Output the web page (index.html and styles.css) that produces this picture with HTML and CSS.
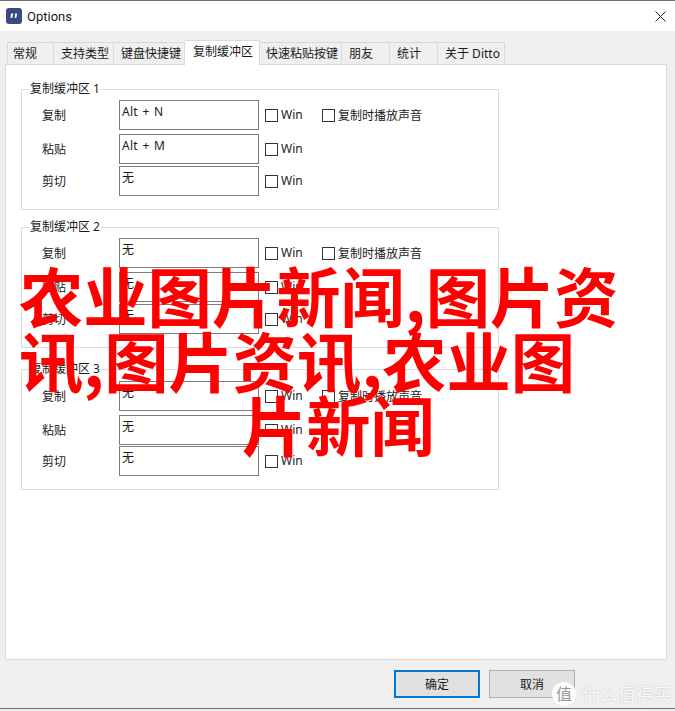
FILE: index.html
```html
<!DOCTYPE html>
<html lang="zh-cn">
<head>
    <meta charset="UTF-8">
    <title>Options</title>
    <link rel="stylesheet" href="styles.css">
</head>
<body>
    <div class="window">
        <div class="titlebar">
            <svg class="app-icon" width="16" height="16" viewBox="0 0 16 16">
                <rect width="16" height="16" rx="3" fill="#3b4a7f"/>
                <path d="M5 5.5h2.2L6.2 10H4.6zM9 5.5h2.2L10.2 10H8.6z" fill="#fff"/>
            </svg>
            <span class="title">Options</span>
            <svg class="close" width="11" height="11" viewBox="0 0 11 11">
                <path d="M.5.5l10 10M10.5.5l-10 10" stroke="#222" stroke-width="1" fill="none"/>
            </svg>
        </div>
        <div class="body">
            <div class="tabs">
                <div class="tab tab-1">常规</div>
                <div class="tab tab-2">支持类型</div>
                <div class="tab tab-3">键盘快捷键</div>
                <div class="tab tab-4 active">复制缓冲区</div>
                <div class="tab tab-5">快速粘贴按键</div>
                <div class="tab tab-6">朋友</div>
                <div class="tab tab-7">统计</div>
                <div class="tab tab-8">关于 Ditto</div>
            </div>
            <div class="pane">
                <fieldset class="group group-1">
                    <legend>复制缓冲区 1</legend>
                    <div class="row">
                        <label class="name">复制</label>
                        <div class="hotkey">Alt + N</div>
                        <span class="check"></span><span class="win">Win</span>
                        <span class="check second"></span><span class="sound">复制时播放声音</span>
                    </div>
                    <div class="row">
                        <label class="name">粘贴</label>
                        <div class="hotkey">Alt + M</div>
                        <span class="check"></span><span class="win">Win</span>
                    </div>
                    <div class="row tight">
                        <label class="name">剪切</label>
                        <div class="hotkey">无</div>
                        <span class="check"></span><span class="win">Win</span>
                    </div>
                </fieldset>
                <fieldset class="group group-2">
                    <legend>复制缓冲区 2</legend>
                    <div class="row">
                        <label class="name">复制</label>
                        <div class="hotkey">无</div>
                        <span class="check"></span><span class="win">Win</span>
                        <span class="check second"></span><span class="sound">复制时播放声音</span>
                    </div>
                    <div class="row">
                        <label class="name">粘贴</label>
                        <div class="hotkey">无</div>
                        <span class="check"></span><span class="win">Win</span>
                    </div>
                    <div class="row tight">
                        <label class="name">剪切</label>
                        <div class="hotkey">无</div>
                        <span class="check"></span><span class="win">Win</span>
                    </div>
                </fieldset>
                <fieldset class="group group-3">
                    <legend>复制缓冲区 3</legend>
                    <div class="row">
                        <label class="name">复制</label>
                        <div class="hotkey">无</div>
                        <span class="check"></span><span class="win">Win</span>
                        <span class="check second"></span><span class="sound">复制时播放声音</span>
                    </div>
                    <div class="row">
                        <label class="name">粘贴</label>
                        <div class="hotkey">无</div>
                        <span class="check"></span><span class="win">Win</span>
                    </div>
                    <div class="row tight">
                        <label class="name">剪切</label>
                        <div class="hotkey">无</div>
                        <span class="check"></span><span class="win">Win</span>
                    </div>
                </fieldset>
            </div>
            <div class="buttons">
                <button class="btn default">确定</button>
                <button class="btn">取消</button>
            </div>
        </div>
        <div class="headline">
            <span class="line line-1">农业图片新闻,图片资</span>
            <span class="line line-2">讯,图片资讯,农业图</span>
            <span class="line line-3">片新闻</span>
        </div>
        <div class="watermark">
            <span class="wm-badge">值</span>
            <span class="wm-text">什么值得买</span>
        </div>
    </div>
</body>
</html>
```

FILE: styles.css
```css
* {
    box-sizing: border-box;
}
body {
    margin: 0;
    font-family: "Noto Sans", "Noto Sans CJK SC", sans-serif;
    font-size: 12px;
    color: #1a1a1a;
    background-color: #efefef;
}
.window {
    position: relative;
    width: 675px;
    height: 711px;
    overflow: hidden;
    border-top: 1px solid #6e6e6e;
}
.titlebar {
    height: 30px;
    display: flex;
    align-items: center;
    padding: 0 9px 0 6px;
    background-color: #fff;
}
.title {
    margin-left: 5px;
    font-family: Roboto, sans-serif;
    font-size: 13px;
}
.close {
    margin-left: auto;
}
.body {
    height: 678px;
    padding: 11px 8px 0 5px;
    background-color: #efefef;
    border-bottom: 1px solid #6e6e6e;
}
.tabs {
    display: flex;
    height: 22px;
    padding-left: 2px;
}
.tab {
    height: 22px;
    padding-left: 7px;
    line-height: 22px;
    border: 1px solid #d9d9d9;
    border-bottom: none;
    border-left: none;
    white-space: nowrap;
}
.tab-1 { width: 47px; padding-left: 5px; border-left: 1px solid #d9d9d9; }
.tab-2 { width: 60px; }
.tab-3 { width: 71px; }
.tab-4 { width: 75px; }
.tab-5 { width: 82px; padding-left: 6px; }
.tab-6 { width: 48px; }
.tab-7 { width: 48px; }
.tab-8 { width: 67px; }
.tab.active {
    position: relative;
    height: 25px;
    margin-top: -2px;
    padding-left: 8px;
    background-color: #fff;
    z-index: 1;
}
.pane {
    height: 596px;
    padding: 17px 0 0 15px;
    background-color: #fff;
    border: 1px solid #d9d9d9;
}
.group {
    width: 478px;
    height: 128px;
    margin: 0;
    padding: 4px 0 0 0;
    border: 1px solid #dcdcdc;
}
.group-1 { margin-bottom: 10px; }
.group-2 { margin-bottom: 14px; }
.group-3 { padding-top: 5px; }
.group-3 .row.tight { margin-top: -3px; }
.group legend {
    margin-left: 7px;
    padding: 0 1px;
    font-size: 12px;
    line-height: 14px;
}
.row {
    display: flex;
    align-items: center;
    height: 30px;
    margin-bottom: 4px;
    padding-left: 20px;
}
.row.tight {
    margin-top: -2px;
}
.name {
    width: 77px;
}
.hotkey {
    width: 140px;
    height: 30px;
    padding: 3px 0 0 2px;
    line-height: 16px;
    word-spacing: 1px;
    letter-spacing: 0.3px;
    border: 1px solid #7a7a7a;
    background-color: #fff;
}
.check {
    width: 13px;
    height: 13px;
    margin-left: 6px;
    border: 1px solid #333;
    background-color: #fff;
}
.win {
    width: 28px;
    margin-left: 3px;
    padding-bottom: 1px;
}
.check.second {
    margin-left: 13px;
}
.sound {
    margin-left: 3px;
    padding-bottom: 1px;
}
.buttons {
    display: flex;
    justify-content: flex-end;
    gap: 9px;
    padding: 10px 92px 0 0;
}
.btn {
    width: 86px;
    height: 28px;
    padding: 0;
    font-family: inherit;
    font-size: 12px;
    color: #1a1a1a;
    background-color: #e1e1e1;
    border: 1px solid #adadad;
}
.btn.default {
    border: 2px solid #0078d7;
}
.headline {
    position: absolute;
    left: 0;
    top: 261px;
    width: 675px;
    font-family: "Noto Sans CJK SC", sans-serif;
    font-size: 64.3px;
    font-weight: 700;
    line-height: 64.5px;
    color: #ff0000;
    white-space: nowrap;
}
.line {
    display: block;
}
.line-1 { padding-left: 19px; }
.line-2 { padding-left: 19px; }
.line-3 { padding-left: 242px; }
.watermark {
    position: absolute;
    left: 552px;
    top: 681px;
    display: flex;
    align-items: center;
    gap: 6px;
    color: rgba(255,255,255,0.9);
    text-shadow: 0 0 2px rgba(0,0,0,0.2);
}
.wm-badge {
    width: 24px;
    height: 24px;
    border-radius: 50%;
    background-color: rgba(255,255,255,0.92);
    color: #999;
    font-size: 16px;
    line-height: 24px;
    text-align: center;
    text-shadow: none;
}
.wm-text {
    font-size: 18px;
    line-height: 24px;
}
```
